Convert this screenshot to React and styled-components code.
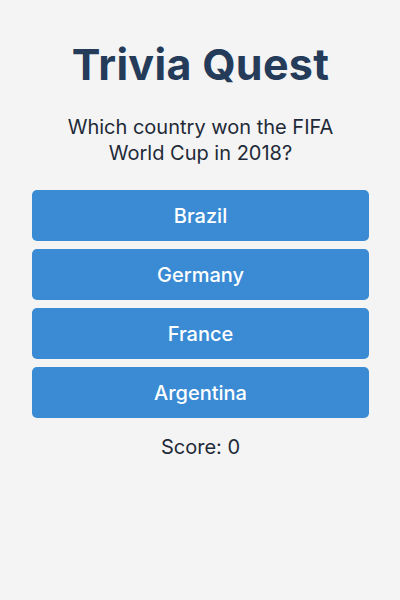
import React, { useState } from 'react';
import styled, { createGlobalStyle } from 'styled-components';

const GlobalStyle = createGlobalStyle`
  html, body {
    margin: 0;
    padding: 0;
    background: #f4f4f4;
    font-family: Inter, "Noto Sans", sans-serif;
  }
`;

const Page = styled.div`
  min-height: 600px;
  box-sizing: border-box;
  padding: 36px 31px 0 32px;
  display: flex;
  flex-direction: column;
  align-items: center;
  background: #f4f4f4;
`;

const Title = styled.h1`
  margin: 0;
  font-size: 43px;
  font-weight: 700;
  color: #243c5a;
  line-height: 56px;
  letter-spacing: 0.3px;
`;

const Question = styled.p`
  margin: 22px 0 0;
  font-size: 20px;
  line-height: 26px;
  color: #1f2a38;
  text-align: center;
  max-width: 280px;
`;

const Options = styled.div`
  margin-top: 24px;
  width: 100%;
  display: flex;
  flex-direction: column;
  gap: 8px;
`;

const Option = styled.button`
  height: 51px;
  width: 100%;
  border: none;
  border-radius: 5px;
  background: ${(p) => (p.$picked ? '#2f78bd' : '#3a8bd4')};
  color: #ffffff;
  font-family: Inter, "Noto Sans", sans-serif;
  font-size: 20px;
  font-weight: 500;
  cursor: pointer;
`;

const Score = styled.div`
  margin-top: 17px;
  font-size: 20px;
  color: #1f2a38;
`;

const answers = ['Brazil', 'Germany', 'France', 'Argentina'];

export default function App() {
  const [score, setScore] = useState(0);
  const [picked, setPicked] = useState(null);

  const choose = (a) => {
    if (picked) return;
    setPicked(a);
    if (a === 'France') setScore(score + 1);
  };

  return (
    <>
      <GlobalStyle />
      <Page>
        <Title>Trivia Quest</Title>
        <Question>Which country won the FIFA World Cup in 2018?</Question>
        <Options>
          {answers.map((a) => (
            <Option key={a} $picked={picked === a} onClick={() => choose(a)}>
              {a}
            </Option>
          ))}
        </Options>
        <Score>Score: {score}</Score>
      </Page>
    </>
  );
}
